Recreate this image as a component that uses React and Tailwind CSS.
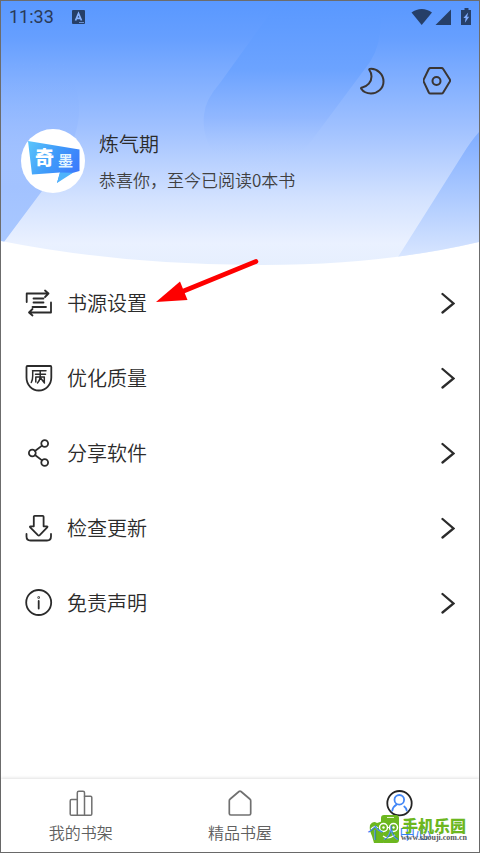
import { useState } from "react";

const menuItems = [
  { id: "source", label: "书源设置", icon: SourceIcon },
  { id: "quality", label: "优化质量", icon: QualityIcon },
  { id: "share", label: "分享软件", icon: ShareIcon },
  { id: "update", label: "检查更新", icon: UpdateIcon },
  { id: "disclaimer", label: "免责声明", icon: InfoIcon }
];

const tabs = [
  { id: "shelf", label: "我的书架", icon: ShelfIcon },
  { id: "store", label: "精品书屋", icon: HouseIcon },
  { id: "me", label: "个人中心", icon: PersonIcon }
];

export default function App() {
  const [activeTab, setActiveTab] = useState("me");

  return (
    <div className="relative flex min-h-screen flex-col border border-[#6c6c6c] bg-white font-['Noto_Sans_CJK_SC',sans-serif] font-[350] text-[#2b2b2b]">
      <header className="relative h-[264px]">
        <HeaderBackdrop />
        <div className="relative">
          <StatusBar />
          <div className="flex items-center justify-end gap-9 px-7 pt-[35px]">
            <button type="button" aria-label="夜间模式">
              <MoonIcon />
            </button>
            <button type="button" aria-label="设置">
              <HexagonIcon />
            </button>
          </div>
          <div className="flex gap-[14px] px-5 pt-[34px]">
            <Avatar />
            <div className="flex flex-col gap-[10px] pt-px">
              <h1 className="text-[20px] leading-[28px]">炼气期</h1>
              <p className="text-[17px] leading-[24px] text-[#404040]">恭喜你，至今已阅读0本书</p>
            </div>
          </div>
        </div>
      </header>

      <main className="relative flex-1">
        <ul>
          {menuItems.map(({ id, label, icon: Icon }) => (
            <li key={id}>
              <button type="button" className="flex h-[75px] w-full items-center gap-[14px] pr-6 pl-6 text-left text-[20px] leading-[28px]">
                <Icon />
                <span className="flex-1">{label}</span>
                <ChevronIcon />
              </button>
            </li>
          ))}
        </ul>
      </main>

      <nav className="relative isolate grid grid-cols-3 py-[10px] shadow-[0_-1px_3px_rgba(0,0,0,0.12)]">
        {tabs.map(({ id, label, icon: Icon }) => (
          <a
            key={id}
            href={`#${id}`}
            onClick={() => setActiveTab(id)}
            className={`flex flex-col items-center gap-[5px] text-[16px] leading-[20px] ${activeTab === id ? "text-[#3b82f6]" : "text-[#606060]"}`}
          >
            <Icon />
            <span className="relative z-10">{label}</span>
          </a>
        ))}
        <Watermark />
      </nav>

      <PointerArrow />
    </div>
  );
}

function StatusBar() {
  return (
    <div className="flex h-[31px] items-center justify-between pr-[7px] pl-2 text-[#263f68]">
      <div className="flex items-center gap-[18px]">
        <span className="font-['Roboto',sans-serif] text-[18px] leading-[20px] font-normal text-[#2a3a57]">11:33</span>
        <svg width="14" height="14" viewBox="0 0 14 14" aria-hidden="true">
          <rect width="13" height="14" rx="1" fill="currentColor" />
          <path d="M3.5 10.5 6.5 3.5 9.5 10.5M4.6 8.3h3.8" fill="none" stroke="#86b2ff" strokeWidth="1.7" />
          <path d="M7 12.5h5" stroke="#86b2ff" strokeWidth="0.7" />
        </svg>
      </div>
      <svg width="61" height="18" viewBox="0 0 61 18" fill="currentColor" aria-hidden="true">
        <path d="M0.5 4.5C6.5-0.2 15-0.2 21 4.5L10.7 17Z" />
        <path d="M24.5 17 40 1.5V17Z" />
        <path d="M51 2h2.5V0h4v2H60v15H50V2Z" />
        <path d="M57.2 4.5 52.4 10h2.2l-.7 4.8 4.3-6h-2.1Z" fill="#7facff" />
      </svg>
    </div>
  );
}

function HeaderBackdrop() {
  return (
    <svg className="absolute inset-0 h-full w-full" viewBox="0 0 478 264" preserveAspectRatio="none" aria-hidden="true">
      <defs>
        <linearGradient id="sky" x1="0" y1="0" x2="0" y2="264" gradientUnits="userSpaceOnUse">
          <stop offset="0" stopColor="#5998ff" />
          <stop offset="0.14" stopColor="#669fff" />
          <stop offset="0.48" stopColor="#a0c1ff" />
          <stop offset="0.75" stopColor="#d3e2ff" />
          <stop offset="0.92" stopColor="#eaf1ff" />
          <stop offset="1" stopColor="#e6effe" />
        </linearGradient>
        <linearGradient id="left" x1="0" y1="60" x2="0" y2="240" gradientUnits="userSpaceOnUse">
          <stop offset="0" stopColor="#78aaff" stopOpacity="0" />
          <stop offset="0.35" stopColor="#93b8ff" stopOpacity="0.5" />
          <stop offset="0.7" stopColor="#a2c2ff" />
          <stop offset="1" stopColor="#a9c8ff" />
        </linearGradient>
        <linearGradient id="center" x1="0" y1="0" x2="0" y2="172" gradientUnits="userSpaceOnUse">
          <stop offset="0" stopColor="#5998ff" />
          <stop offset="0.4" stopColor="#6ca3ff" />
          <stop offset="0.68" stopColor="#8fb6ff" stopOpacity="0.8" />
          <stop offset="0.9" stopColor="#b4ceff" stopOpacity="0.3" />
          <stop offset="1" stopColor="#c4d8ff" stopOpacity="0" />
        </linearGradient>
        <linearGradient id="right" x1="0" y1="130" x2="0" y2="255" gradientUnits="userSpaceOnUse">
          <stop offset="0" stopColor="#7eacff" />
          <stop offset="1" stopColor="#d7e5ff" />
        </linearGradient>
        <clipPath id="curve">
          <path d="M0 0H478V241Q380 264 262 264Q120 264 0 240Z" />
        </clipPath>
      </defs>
      <g clipPath="url(#curve)">
        <rect width="478" height="264" fill="url(#sky)" />
        <path d="M0 50H58C78 82 84 108 72 140Q66 158 41 190L3 241H0Z" fill="url(#left)" />
        <path d="M278 0H378Q384 38 369 61L314 135Q290 170 250 172C216 169 200 140 203 114Q204 99 219 82Z" fill="url(#center)" />
        <path d="M478 131Q470 140 462 153L397 256L478 245Z" fill="url(#right)" />
      </g>
    </svg>
  );
}

function Avatar() {
  return (
    <svg width="64" height="64" viewBox="0 0 64 64" role="img" aria-label="奇墨">
      <defs>
        <linearGradient id="logo" x1="7" y1="12" x2="59" y2="42" gradientUnits="userSpaceOnUse">
          <stop offset="0" stopColor="#5cc6fb" />
          <stop offset="0.5" stopColor="#3f9bfa" />
          <stop offset="1" stopColor="#3c78fc" />
        </linearGradient>
      </defs>
      <circle cx="32" cy="32" r="32" fill="#ffffff" />
      <path d="M7 12 58.5 20.5V42L46 45.5 36 54 39 43.5 11 45.5Z" fill="url(#logo)" />
      <path d="M39 43.5 52 43.7 36 54Z" fill="#4fb4fb" />
      <text x="14" y="36" fontSize="19" fontWeight="900" fill="#ffffff">奇</text>
      <text x="37" y="37" fontSize="15" fontWeight="700" fill="#e3f5ff">墨</text>
    </svg>
  );
}

function LineIcon({ width = 1.8, color = "#2b2b2b", children }) {
  return (
    <svg width="28" height="28" viewBox="0 0 28 28" fill="none" stroke={color} strokeWidth={width} strokeLinecap="round" strokeLinejoin="round" aria-hidden="true">
      {children}
    </svg>
  );
}

function MoonIcon() {
  return (
    <LineIcon width={2} color="#3a3533">
      <path d="M11.5 1.8C18 1.5 24.5 7 24.5 14.5C24.5 21.5 18.5 26.5 12 26.5C7.8 26.5 4 24.5 2.2 21.8C1.7 21 2.2 20.6 3.2 20.4C8.5 19.5 12.5 15 12.5 9.5C12.5 6.8 11.6 4.6 10.4 3C9.9 2.2 10.4 1.8 11.5 1.8Z" />
    </LineIcon>
  );
}

function HexagonIcon() {
  return (
    <LineIcon width={2} color="#3a3533">
      <path d="M7.6 1H18.4Q19.6 1 20.2 2L26.7 12.3Q27.4 13.5 26.7 14.8L20.2 25.5Q19.6 26.6 18.4 26.6H7.6Q6.4 26.6 5.8 25.5L.8 14.8Q.2 13.5 .8 12.3L5.8 2Q6.4 1 7.6 1Z" />
      <circle cx="13.5" cy="14" r="4" />
    </LineIcon>
  );
}

function SourceIcon() {
  return (
    <LineIcon>
      <path d="M1.7 13V4.5H23.5M20 1.5 23.5 4.5 20 8" />
      <path d="M26 13.5V23.5H4M7.5 20 4 23.5 7.5 26.5" />
      <path d="M8.5 9.5H18.5M8.5 13.5H18.5M7.5 18H21" />
    </LineIcon>
  );
}

function QualityIcon() {
  return (
    <LineIcon>
      <path d="M2.5 2H25.5Q26.3 2 26.3 3V13.5C26.3 21 20.5 26.5 13.8 26.5S1.5 21 1.5 13.5V3Q1.5 2 2.5 2Z" />
      <path d="M7.5 6.8H21M7.7 6.8V12Q7.7 16 6.3 18.5M10.5 10.3H20.5M10.8 18V13H19.3V18M15.2 7V13.5Q14.5 17 12.5 19M15.2 13.5 19.5 19" strokeWidth="1.5" />
    </LineIcon>
  );
}

function ShareIcon() {
  return (
    <LineIcon>
      <circle cx="19.7" cy="4.5" r="3.4" />
      <circle cx="7.3" cy="14" r="3.4" />
      <circle cx="19.7" cy="23.5" r="3.4" />
      <path d="M10 12 17 6.6M10 16 17 21.4" />
    </LineIcon>
  );
}

function UpdateIcon() {
  return (
    <LineIcon>
      <path d="M9.7 1.8H17.7Q18.6 1.8 18.6 2.7V12.3H21.8Q23 12.5 22.2 13.4L14.7 21.2Q13.8 22 12.9 21.2L5.2 13.4Q4.5 12.5 5.6 12.3H8.8V2.7Q8.8 1.8 9.7 1.8Z" />
      <path d="M1.5 20V22.5Q1.5 26.5 5.5 26.5H22Q26 26.5 26 22.5V20" />
    </LineIcon>
  );
}

function InfoIcon() {
  return (
    <LineIcon>
      <circle cx="13.7" cy="13.5" r="12.5" />
      <path d="M13.7 12V19.5" />
      <circle cx="13.7" cy="8.5" r="0.4" />
    </LineIcon>
  );
}

function ChevronIcon() {
  return (
    <svg width="14" height="22" viewBox="0 0 14 22" fill="none" stroke="#2b2b2b" strokeWidth="2.3" strokeLinecap="round" aria-hidden="true">
      <path d="M1.5 2 12.5 11.5 1.5 20.5" />
    </svg>
  );
}

function ShelfIcon() {
  return (
    <LineIcon width={1.5} color="#707070">
      <path d="M10.3 10.5H4.5Q3.2 10.5 3.2 12V25Q3.2 26.3 4.5 26.3H23.5Q24.8 26.3 24.8 25V8.5Q24.8 7.2 23.5 7.2H17.5" />
      <path d="M10.3 26V3.7Q10.3 2.2 11.8 2.2H16Q17.5 2.2 17.5 3.7V26" />
    </LineIcon>
  );
}

function HouseIcon() {
  return (
    <LineIcon width={1.7} color="#707070">
      <path d="M3.3 11.8Q3.3 10.7 4.2 10L13 2.5Q14 1.8 15 2.5L23.8 10Q24.7 10.7 24.7 11.8V24.5Q24.7 26 23.2 26H4.8Q3.3 26 3.3 24.5Z" />
    </LineIcon>
  );
}

function PersonIcon() {
  return (
    <LineIcon width={1.8} color="#4387f7">
      <circle cx="14.5" cy="14.2" r="12.2" stroke="#242424" />
      <circle cx="14.3" cy="10.8" r="4.8" />
      <path d="M7.3 21.5Q8 17.5 11.5 15.6M19.3 17.5Q21.3 19 21.7 21.5" />
    </LineIcon>
  );
}

// site mark around the last tab label
function Watermark() {
  return (
    <div className="pointer-events-none absolute right-3 bottom-2 flex items-center gap-px">
      <svg width="31" height="30" viewBox="0 0 31 30" aria-hidden="true">
        <path d="M1 11Q4 6 8 9L14 7V29H5L3 22Q0 16 1 11Z" fill="#6cb71f" />
        <rect x="12" y="1" width="18" height="28" rx="3" fill="#6cb71f" />
        <path d="M18 3.5H25" stroke="#e5f5d0" strokeWidth="1" />
        <g fill="#6cb71f" stroke="#ffffff" strokeWidth="1.5">
          <circle cx="14.5" cy="13.5" r="4" />
          <circle cx="24.5" cy="13.5" r="4" />
        </g>
        <path d="M18.5 13.5H20.5M2 15Q5 11 9 14M14 22Q19 26 26 21" fill="none" stroke="#ffffff" strokeWidth="1.2" />
        <circle cx="14.5" cy="13.5" r="1.2" fill="#ffffff" />
        <circle cx="24.5" cy="13.5" r="1.2" fill="#ffffff" />
      </svg>
      <div className="relative z-20 flex flex-col items-center">
        <span className="text-[16px] leading-[18px] font-black text-[#6cb71f]">手机乐园</span>
        <span className="font-['Liberation_Serif',serif] text-[8px] leading-[8px] font-bold text-[#55585c]">www.shouji.com.cn</span>
      </div>
    </div>
  );
}

function PointerArrow() {
  return (
    <svg className="pointer-events-none absolute top-[256px] left-[154px]" width="106" height="48" viewBox="0 0 106 48" aria-hidden="true">
      <path d="M25 35.5 101 4.5" stroke="#fe0000" strokeWidth="4.6" strokeLinecap="round" />
      <path d="M1 45 25 24.5 32.5 43Z" fill="#fe0000" />
    </svg>
  );
}
